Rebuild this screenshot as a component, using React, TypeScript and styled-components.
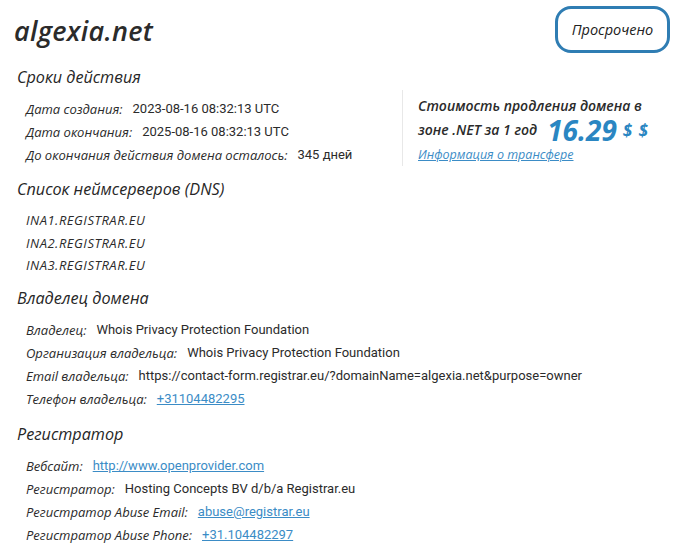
import styled, { createGlobalStyle } from "styled-components";

const GlobalStyle = createGlobalStyle`
  html, body {
    margin: 0;
    padding: 0;
    background: #ffffff;
  }
  body {
    font-family: Roboto, "Liberation Sans", Arial, sans-serif;
    color: #222;
  }
`;

const Page = styled.div`
  width: 679px;
  padding: 5px 9px 0 14px;
  box-sizing: border-box;
`;

const Header = styled.div`
  display: flex;
  justify-content: space-between;
  align-items: flex-start;
  height: 53px;
`;

const Domain = styled.h1`
  margin: 13px 0 0;
  font-family: "Open Sans", sans-serif;
  font-style: italic;
  font-weight: 600;
  font-size: 27px;
  line-height: 26px;
  letter-spacing: 0.3px;
  color: #2b2b2b;
`;

const Badge = styled.div`
  width: 115px;
  height: 47px;
  margin-top: 1px;
  box-sizing: border-box;
  border: 3px solid #2f7db3;
  border-radius: 16px;
  display: flex;
  align-items: center;
  justify-content: center;
  font-family: "Open Sans", sans-serif;
  font-style: italic;
  font-weight: 500;
  font-size: 14.5px;
  color: #222;
`;

const SectionTitle = styled.h2`
  margin: 0;
  padding-left: 3px;
  font-family: "Open Sans", sans-serif;
  font-style: italic;
  font-weight: 500;
  font-size: 16.2px;
  color: #262626;
  height: 24px;
  line-height: 24px;
`;

const Section = styled.section<{ $gap: number }>`
  margin-top: ${(p) => p.$gap}px;
`;

const Columns = styled.div`
  display: flex;
  align-items: flex-start;
`;

const Rows = styled.div`
  padding: 8px 0 0 12px;
  width: 376px;
`;

const Row = styled.div<{ $h?: number }>`
  height: ${(p) => p.$h ?? 23}px;
  display: flex;
  align-items: center;
  font-size: 13px;
  white-space: nowrap;
`;

const Label = styled.span`
  font-family: "Open Sans", sans-serif;
  font-style: italic;
  font-size: 13px;
  color: #2b2b2b;
  margin-right: 10px;
`;

const Value = styled.span`
  color: #2b2b2b;
`;

const ValueLink = styled.a`
  color: #3b8cc6;
  text-decoration: underline;
`;

const Divider = styled.div`
  width: 1px;
  height: 76px;
  background: #e8e8e8;
  margin: 1px 15px 0 0;
`;

const Price = styled.div`
  padding-top: 5px;
  font-family: "Open Sans", sans-serif;
  font-style: italic;
  font-weight: 600;
  font-size: 14px;
  color: #2b2b2b;
`;

const PriceLine = styled.div<{ $h: number }>`
  height: ${(p) => p.$h}px;
  display: flex;
  align-items: center;
  white-space: nowrap;
`;

const Amount = styled.span`
  font-size: 28px;
  font-weight: 700;
  line-height: 20px;
  color: #2a86c2;
  margin-left: 10px;
`;

const Currency = styled.span`
  font-size: 17px;
  font-weight: 700;
  line-height: 18px;
  color: #2a86c2;
  margin-left: 6px;
  letter-spacing: 1px;
  align-self: flex-end;
  margin-bottom: 2px;
`;

const PriceLink = styled.a`
  font-weight: 500;
  font-size: 12.5px;
  color: #3b8cc6;
  text-decoration: underline;
`;

const NsRow = styled(Row)`
  font-family: "Open Sans", sans-serif;
  font-style: italic;
  font-size: 13px;
  letter-spacing: 0.5px;
  color: #2b2b2b;
`;

export default function App() {
  return (
    <Page>
      <GlobalStyle />
      <Header>
        <Domain>algexia.net</Domain>
        <Badge>Просрочено</Badge>
      </Header>

      <Section $gap={7}>
        <SectionTitle>Сроки действия</SectionTitle>
        <Columns>
          <Rows>
            <Row>
              <Label>Дата создания:</Label>
              <Value>2023-08-16 08:32:13 UTC</Value>
            </Row>
            <Row>
              <Label>Дата окончания:</Label>
              <Value>2025-08-16 08:32:13 UTC</Value>
            </Row>
            <Row>
              <Label>До окончания действия домена осталось:</Label>
              <Value>345 дней</Value>
            </Row>
          </Rows>
          <Divider />
          <Price>
            <PriceLine $h={23}>Стоимость продления домена в</PriceLine>
            <PriceLine $h={25}>
              зоне .NET за 1 год<Amount>16.29</Amount>
              <Currency>$ $</Currency>
            </PriceLine>
            <PriceLine $h={24}>
              <PriceLink href="#">Информация о трансфере</PriceLink>
            </PriceLine>
          </Price>
        </Columns>
      </Section>

      <Section $gap={11}>
        <SectionTitle>Список неймсерверов (DNS)</SectionTitle>
        <Rows>
          <NsRow $h={22.5}>INA1.REGISTRAR.EU</NsRow>
          <NsRow $h={22.5}>INA2.REGISTRAR.EU</NsRow>
          <NsRow $h={22.5}>INA3.REGISTRAR.EU</NsRow>
        </Rows>
      </Section>

      <Section $gap={9.5}>
        <SectionTitle>Владелец домена</SectionTitle>
        <Rows>
          <Row>
            <Label>Владелец:</Label>
            <Value>Whois Privacy Protection Foundation</Value>
          </Row>
          <Row>
            <Label>Организация владельца:</Label>
            <Value>Whois Privacy Protection Foundation</Value>
          </Row>
          <Row>
            <Label>Email владельца:</Label>
            <Value>https://contact-form.registrar.eu/?domainName=algexia.net&amp;purpose=owner</Value>
          </Row>
          <Row>
            <Label>Телефон владельца:</Label>
            <ValueLink href="#">+31104482295</ValueLink>
          </Row>
        </Rows>
      </Section>

      <Section $gap={12}>
        <SectionTitle>Регистратор</SectionTitle>
        <Rows>
          <Row>
            <Label>Вебсайт:</Label>
            <ValueLink href="#">http://www.openprovider.com</ValueLink>
          </Row>
          <Row>
            <Label>Регистратор:</Label>
            <Value>Hosting Concepts BV d/b/a Registrar.eu</Value>
          </Row>
          <Row>
            <Label>Регистратор Abuse Email:</Label>
            <ValueLink href="#">abuse@registrar.eu</ValueLink>
          </Row>
          <Row>
            <Label>Регистратор Abuse Phone:</Label>
            <ValueLink href="#">+31.104482297</ValueLink>
          </Row>
        </Rows>
      </Section>
    </Page>
  );
}
